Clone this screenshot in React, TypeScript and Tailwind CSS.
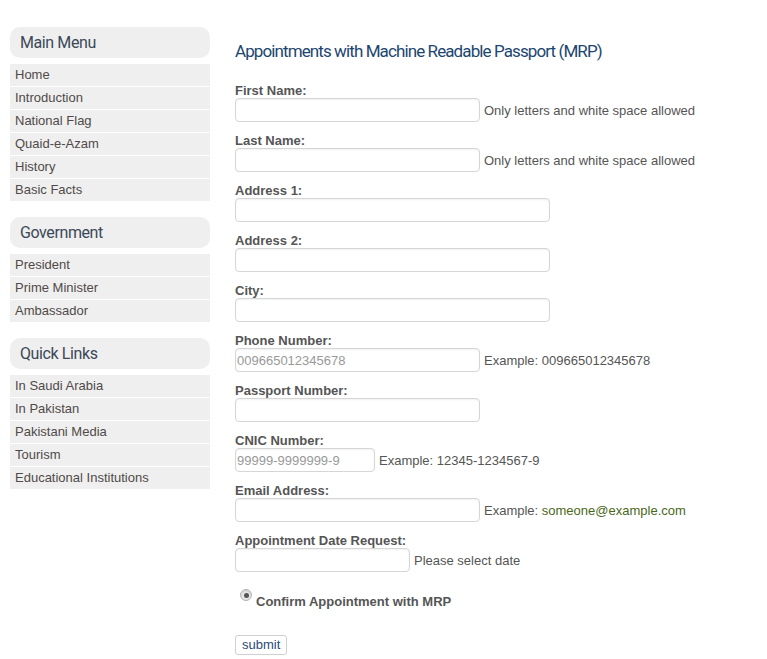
import React from "react";

const groups = [
  { title: "Main Menu", items: ["Home", "Introduction", "National Flag", "Quaid-e-Azam", "History", "Basic Facts"] },
  { title: "Government", items: ["President", "Prime Minister", "Ambassador"] },
  { title: "Quick Links", items: ["In Saudi Arabia", "In Pakistan", "Pakistani Media", "Tourism", "Educational Institutions"] },
];

const condensed = { fontFamily: 'Roboto, "Liberation Sans", sans-serif' } as React.CSSProperties;

function Field({ label, width, placeholder, hint }: { label: string; width: string; placeholder?: string; hint?: React.ReactNode }) {
  return (
    <div className="flex flex-col h-[50px] shrink-0">
      <div className="h-[16px] leading-[17px] text-[13px] font-bold text-[#555]">{label}</div>
      <div className="flex items-center h-[24px]">
        <input
          className={`${width} h-[24px] border border-[#d6d6d6] rounded-[4px] bg-white px-[1px] text-[13px] text-[#555] placeholder:text-[#999] shadow-[inset_0_1px_2px_rgba(0,0,0,0.06)] outline-none`}
          placeholder={placeholder}
        />
        {hint && <span className="ml-[4px] text-[13px] leading-[16px] pt-[1px] text-[#555]">{hint}</span>}
      </div>
    </div>
  );
}

export default function App() {
  return (
    <div className="w-[767px] h-[659px] bg-white flex items-start pl-[10px] pt-[27px] overflow-hidden" style={{ fontFamily: '"Liberation Sans", Arial, sans-serif' }}>
      <div className="w-[200px] flex flex-col gap-[16px] shrink-0">
        {groups.map((g) => (
          <div key={g.title} className="flex flex-col">
            <div className="h-[31px] rounded-[10px] bg-[#efefef] pl-[10px] flex items-center text-[16px] tracking-[-0.4px] text-[#3b4858]" style={condensed}>
              {g.title}
            </div>
            <div className="flex flex-col gap-[1px] mt-[6px]">
              {g.items.map((it) => (
                <div key={it} className="h-[22px] bg-[#efefef] pl-[5px] flex items-center text-[13px] text-[#4f4a48]">
                  {it}
                </div>
              ))}
            </div>
          </div>
        ))}
      </div>
      <div className="ml-[25px] flex flex-col shrink-0">
        <div className="h-[26px] mt-[11px] mb-[18px] text-[17px] tracking-[-0.9px] leading-[26px] text-[#1c4670] shrink-0" style={condensed}>
          Appointments with Machine Readable Passport (MRP)
        </div>
        <Field label="First Name:" width="w-[245px]" hint="Only letters and white space allowed" />
        <Field label="Last Name:" width="w-[245px]" hint="Only letters and white space allowed" />
        <Field label="Address 1:" width="w-[315px]" />
        <Field label="Address 2:" width="w-[315px]" />
        <Field label="City:" width="w-[315px]" />
        <Field label="Phone Number:" width="w-[245px]" placeholder="009665012345678" hint="Example: 009665012345678" />
        <Field label="Passport Number:" width="w-[245px]" />
        <Field label="CNIC Number:" width="w-[140px]" placeholder="99999-9999999-9" hint="Example: 12345-1234567-9" />
        <Field
          label="Email Address:"
          width="w-[245px]"
          hint={
            <>
              Example: <span className="text-[#4a6720]">someone@example.com</span>
            </>
          }
        />
        <Field label="Appointment Date Request:" width="w-[175px]" hint="Please select date" />
        <div className="flex items-start mt-[3px] ml-[5px] shrink-0">
          <span className="mt-[4px] w-[12px] h-[12px] rounded-full border border-[#b5b5b5] bg-[#e8e8e8] flex items-center justify-center shadow-[inset_0_1px_2px_rgba(0,0,0,0.15)]">
            <span className="w-[5px] h-[5px] rounded-full bg-[#555]" />
          </span>
          <span className="ml-[4px] mt-[9px] text-[13px] leading-[16px] font-bold text-[#555]">Confirm Appointment with MRP</span>
        </div>
        <div className="mt-[22px] shrink-0">
          <button className="h-[20px] px-[6px] border border-[#d0d0d0] rounded-[3px] bg-white text-[13px] leading-[18px] text-[#2b4a78]">
            submit
          </button>
        </div>
      </div>
    </div>
  );
}
